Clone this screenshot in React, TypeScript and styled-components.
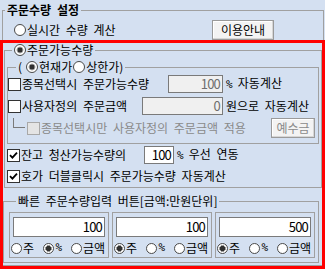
import styled, { createGlobalStyle } from 'styled-components';

const GlobalStyle = createGlobalStyle`
  html, body {
    margin: 0;
    padding: 0;
    background: #d4e0f1;
  }
  body {
    font-family: "Noto Sans CJK KR", "Noto Sans", sans-serif;
    font-size: 12px;
    color: #000;
  }
`;

const Screen = styled.div`
  position: relative;
  width: 325px;
  height: 269px;
  overflow: hidden;
  box-sizing: border-box;
  padding: 3px 0 0 2px;
`;

const Group = styled.fieldset<{ $margin: string; $pad: string }>`
  margin: ${(p) => p.$margin};
  padding: ${(p) => p.$pad};
  border: 1px solid #a0a0a0;
  min-width: 0;
  box-sizing: border-box;
`;

const Legend = styled.legend<{ $indent: number; $strong?: boolean }>`
  margin-left: ${(p) => p.$indent}px;
  padding: 0 2px;
  height: 14px;
  line-height: 14px;
  display: flex;
  align-items: center;
  gap: 1px;
  white-space: nowrap;
  word-spacing: 3px;
  font-weight: ${(p) => (p.$strong ? 700 : 400)};
`;

const Row = styled.div<{ $top?: number; $left?: number }>`
  display: flex;
  align-items: center;
  height: 20px;
  margin-top: ${(p) => p.$top ?? 0}px;
  padding-left: ${(p) => p.$left ?? 0}px;
  white-space: nowrap;
  word-spacing: 3px;
`;

const Label = styled.span<{ $width?: number; $muted?: boolean }>`
  flex: 0 0 ${(p) => (p.$width ? `${p.$width}px` : 'auto')};
  margin-left: 1px;
  color: ${(p) => (p.$muted ? '#8a8a8a' : '#000')};
  line-height: 14px;
`;

const Suffix = styled.span`
  margin-left: 3px;
  line-height: 14px;
`;

const Pct = styled.span`
  font-family: "DejaVu Sans Mono", monospace;
  font-size: 11px;
  letter-spacing: -0.5px;
`;

const Dot = styled.span<{ $on?: boolean; $size: number }>`
  flex: 0 0 ${(p) => p.$size}px;
  width: ${(p) => p.$size}px;
  height: ${(p) => p.$size}px;
  box-sizing: border-box;
  border-radius: 50%;
  border: 1px solid #4a4a4a;
  background: ${(p) =>
    p.$on
      ? 'radial-gradient(circle, #303030 0 2.4px, #9c9c9c 2.6px 3.4px, #fff 3.6px)'
      : '#fff'};
`;

const Choice = styled.span`
  display: inline-flex;
  align-items: center;
  gap: 1px;
  line-height: 14px;
`;

const Tick = styled.span<{ $disabled?: boolean }>`
  flex: 0 0 13px;
  width: 13px;
  height: 13px;
  box-sizing: border-box;
  border: 1px solid ${(p) => (p.$disabled ? '#a8a8a8' : '#333')};
  background: ${(p) => (p.$disabled ? '#e4e4e4' : '#fff')};
  display: flex;
  align-items: center;
  justify-content: center;
`;

const Field = styled.span<{ $width: number; $height?: number; $disabled?: boolean }>`
  flex: 0 0 ${(p) => p.$width}px;
  width: ${(p) => p.$width}px;
  height: ${(p) => p.$height ?? 18}px;
  box-sizing: border-box;
  border: 1px solid #7a7a7a;
  background: ${(p) => (p.$disabled ? '#f0f0f0' : '#fff')};
  color: ${(p) => (p.$disabled ? '#6e6e6e' : '#000')};
  display: flex;
  align-items: center;
  justify-content: flex-end;
  padding-right: 2px;
  line-height: 14px;
  font-size: 13px;
  letter-spacing: -0.8px;
`;

const Button = styled.span<{ $width: number; $right: number; $muted?: boolean }>`
  flex: 0 0 ${(p) => p.$width}px;
  height: 20px;
  margin-left: auto;
  margin-right: ${(p) => p.$right}px;
  box-sizing: border-box;
  border: 1px solid #9a9a9a;
  background: #f3f3f3;
  box-shadow: inset -1px -1px 0 #d6d6d6, inset 1px 1px 0 #fff;
  color: ${(p) => (p.$muted ? '#8a8a8a' : '#000')};
  display: flex;
  align-items: center;
  justify-content: center;
  line-height: 14px;
`;

const Elbow = styled.span`
  align-self: flex-start;
  flex: 0 0 12px;
  height: 10px;
  box-sizing: border-box;
  margin-left: 5px;
  margin-right: 2px;
  border-left: 1px solid #7a7a7a;
  border-bottom: 1px solid #7a7a7a;
`;

const QuickRow = styled.div`
  display: flex;
  gap: 3px;
`;

const QuickCard = styled.div`
  flex: 0 0 100px;
  box-sizing: border-box;
  border: 1px solid #a0a0a0;
  padding: 4px 3px 1px 3px;
`;

const QuickOptions = styled.div`
  display: flex;
  justify-content: space-between;
  align-items: center;
  height: 16px;
  margin-top: 3px;
  margin-left: -2px;
`;

const Highlight = styled.div`
  position: absolute;
  left: 0;
  top: 40px;
  width: 325px;
  height: 229px;
  box-sizing: border-box;
  border: 3px solid #ff0000;
  pointer-events: none;
`;

const Radio = ({ on, size = 12, children }: { on?: boolean; size?: number; children: React.ReactNode }) => (
  <Choice>
    <Dot $on={on} $size={size} />
    {children}
  </Choice>
);

const Check = ({ on, disabled }: { on?: boolean; disabled?: boolean }) => (
  <Tick $disabled={disabled}>
    {on && (
      <svg width="9" height="9" viewBox="0 0 9 9">
        <path d="M1 4.2 L3.4 6.6 L8 1.6" fill="none" stroke="#000" strokeWidth="1.8" />
      </svg>
    )}
  </Tick>
);

const quick = [
  { value: '100', pick: 1 },
  { value: '100', pick: 0 },
  { value: '500', pick: 0 },
];

export default function App() {
  return (
    <>
      <GlobalStyle />
      <Screen>
        <Group $margin="0" $pad="0 0 2px 0" style={{ width: 322 }}>
          <Legend $indent={2} $strong>주문수량 설정</Legend>
          <Row $top={3} $left={11}>
            <Radio>실시간 수량 계산</Radio>
            <Button $width={62} $right={49}>이용안내</Button>
          </Row>

          <Group $margin="3px 1px 0 1px" $pad="0 0 1px 0">
            <Legend $indent={7}>
              <Radio on>주문가능수량</Radio>
            </Legend>
            <Group $margin="3px 2px 0 2px" $pad="0 0 5px 0">
              <Legend $indent={8}>
                <span style={{ marginRight: 3 }}>(</span>
                <Radio on>현재가</Radio>
                <Radio>상한가)</Radio>
              </Legend>
              <Row>
                <Check />
                <Label $width={146}>종목선택시 주문가능수량</Label>
                <Field $width={55} $disabled>100</Field>
                <Suffix><Pct>%</Pct> 자동계산</Suffix>
              </Row>
              <Row $top={2}>
                <Check />
                <Label $width={120}>사용자정의 주문금액</Label>
                <Field $width={81} $disabled>0</Field>
                <Suffix>원으로 자동계산</Suffix>
              </Row>
              <Row $top={2}>
                <Elbow />
                <Check disabled />
                <Label $muted>종목선택시만 사용자정의 주문금액 적용</Label>
                <Button $width={44} $right={3} $muted>예수금</Button>
              </Row>
            </Group>
            <Row $top={1} $left={2}>
              <Check on />
              <Label $width={123}>잔고 청산가능수량의</Label>
              <Field $width={30}>100</Field>
              <Suffix><Pct>%</Pct> 우선 연동</Suffix>
            </Row>
            <Row $top={1} $left={2}>
              <Check on />
              <Label>호가 더블클릭시 주문가능수량 자동계산</Label>
            </Row>
          </Group>

          <Group $margin="6px 4px 0 0" $pad="4px 0 4px 5px">
            <Legend $indent={7}>빠른 주문수량입력 버튼[금액:만원단위]</Legend>
            <QuickRow>
              {quick.map((q, i) => (
                <QuickCard key={i}>
                  <Field $width={92} $height={20}>
                    {q.value}
                  </Field>
                  <QuickOptions>
                    <Radio size={11} on={q.pick === 0}>주</Radio>
                    <Radio size={11} on={q.pick === 1}><Pct>%</Pct></Radio>
                    <Radio size={11} on={q.pick === 2}>금액</Radio>
                  </QuickOptions>
                </QuickCard>
              ))}
            </QuickRow>
          </Group>
        </Group>
        <Highlight />
      </Screen>
    </>
  );
}
